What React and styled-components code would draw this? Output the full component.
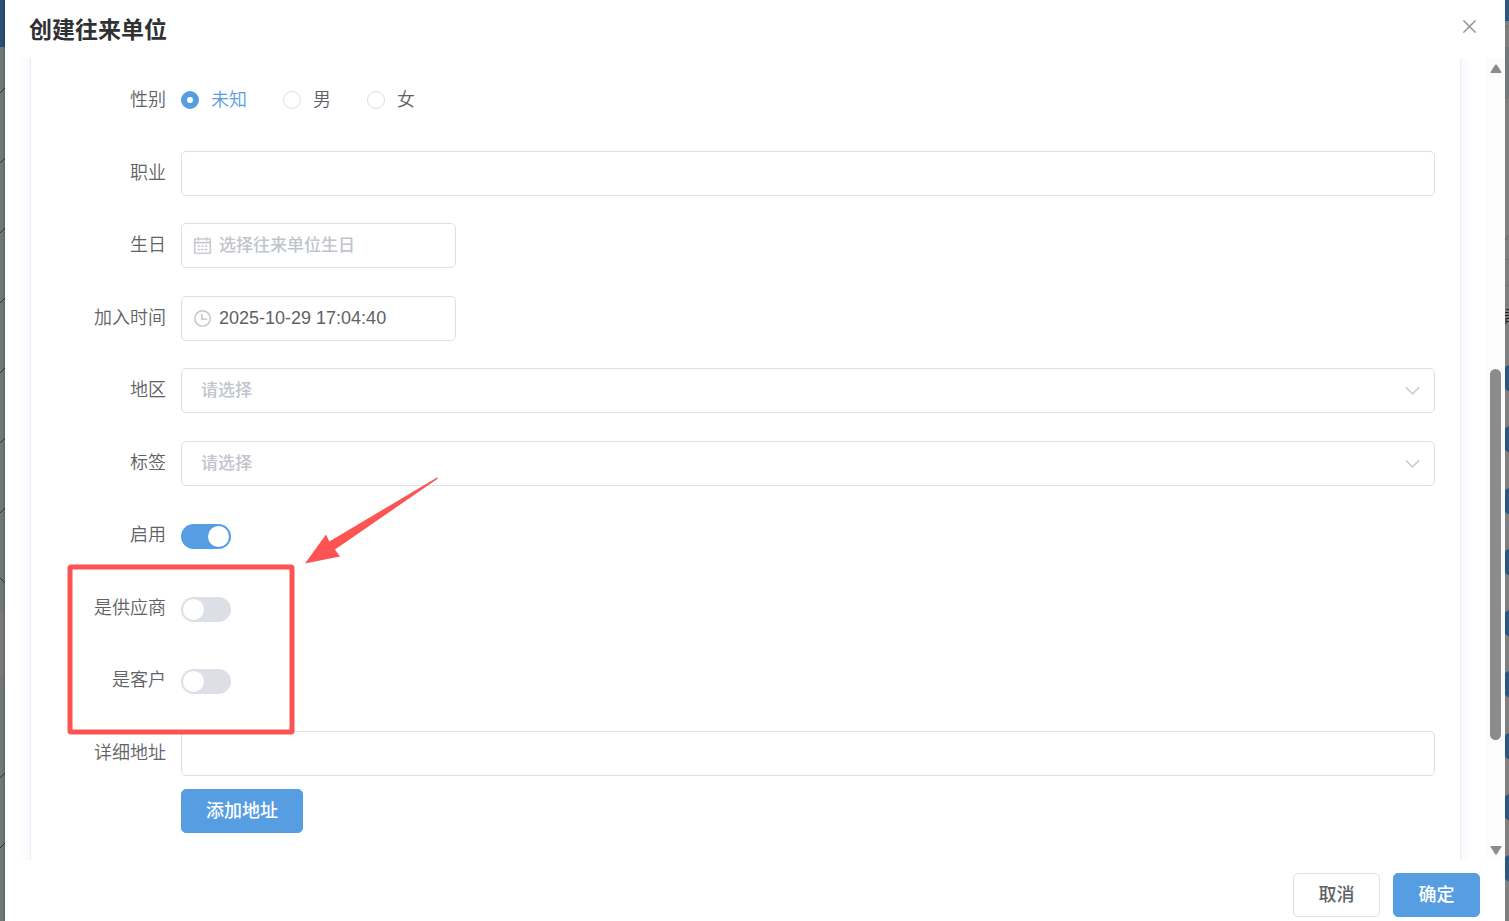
import { useState } from "react";
import styled, { createGlobalStyle } from "styled-components";

const CALENDAR = "M128 384v512h768V192H768v32a32 32 0 1 1-64 0v-32H320v32a32 32 0 0 1-64 0v-32H128v128h768v64zm192-256h384V96a32 32 0 1 1 64 0v32h160a32 32 0 0 1 32 32v768a32 32 0 0 1-32 32H96a32 32 0 0 1-32-32V160a32 32 0 0 1 32-32h160V96a32 32 0 0 1 64 0zm-32 384h64a32 32 0 0 1 0 64h-64a32 32 0 0 1 0-64m0 192h64a32 32 0 1 1 0 64h-64a32 32 0 1 1 0-64m192-192h64a32 32 0 0 1 0 64h-64a32 32 0 0 1 0-64m0 192h64a32 32 0 1 1 0 64h-64a32 32 0 1 1 0-64m192-192h64a32 32 0 1 1 0 64h-64a32 32 0 1 1 0-64m0 192h64a32 32 0 1 1 0 64h-64a32 32 0 1 1 0-64";
const CLOCK = "M512 896a384 384 0 1 0 0-768 384 384 0 0 0 0 768m0 64a448 448 0 1 1 0-896 448 448 0 0 1 0 896M480 256a32 32 0 0 1 32 32v256a32 32 0 0 1-64 0V288a32 32 0 0 1 32-32M480 512h256q32 0 32 32t-32 32H480q-32 0-32-32t32-32";
const ARROW_DOWN = "M831.872 340.864 512 652.672 192.128 340.864a30.592 30.592 0 0 0-42.752 0 29.12 29.12 0 0 0 0 41.6L489.664 714.24a32 32 0 0 0 44.672 0l340.288-331.712a29.12 29.12 0 0 0 0-41.728 30.592 30.592 0 0 0-42.752 0z";
const CLOSE = "M764.288 214.592 512 466.88 259.712 214.592a31.936 31.936 0 0 0-45.12 45.12L466.752 512 214.528 764.224a31.936 31.936 0 1 0 45.12 45.184L512 557.184l252.288 252.288a31.936 31.936 0 0 0 45.12-45.12L557.12 512.064l252.288-252.352a31.936 31.936 0 1 0-45.12-45.184z";

const genders = ["未知", "男", "女"];
const leftMarks = [90, 160, 230, 300, 370, 440, 510];
const rightDots = [378, 439, 501, 562, 623, 684, 746, 807, 868];

function Icon({ d, size }){
    return(
        <svg width={size} height={size} viewBox="0 0 1024 1024" fill="currentColor" stroke="currentColor" strokeWidth="14" aria-hidden="true">
            <path d={d} />
        </svg>
    )
}

function SwitchRow({ id, label, initial }){
    const [on, setOn] = useState(initial);
    return(
        <Row>
            <Label htmlFor={id}>{label}</Label>
            <Switch id={id} type="checkbox" role="switch" checked={on} onChange={(e) => setOn(e.target.checked)} />
        </Row>
    )
}

function SelectRow({ id, label }){
    return(
        <Row>
            <Label htmlFor={id}>{label}</Label>
            <SelectBox>
                <Select id={id} defaultValue="">
                    <option value="">请选择</option>
                </Select>
                <Icon d={ARROW_DOWN} size={19} />
            </SelectBox>
        </Row>
    )
}

export default function App(){
    const [gender, setGender] = useState("未知");

    return(
        <Page>
            <GlobalStyle />
            <Strip aria-hidden="true">
                <svg width="5" height="100%">
                    <rect width="5" height="47" fill="#2b4f75" />
                    <rect y="612" width="5" height="63" fill="#7d7b7b" />
                    {leftMarks.map((y) => <path key={y} d={`M0 ${y + 3}l5-5`} stroke="#333" />)}
                    <path d="M0 578l5 5M0 778l5-5M0 848l5-5" stroke="#333" />
                </svg>
            </Strip>

            <Dialog role="dialog" aria-labelledby="dialog-title">
                <Header>
                    <Title id="dialog-title">创建往来单位</Title>
                    <CloseButton type="button" aria-label="关闭"><Icon d={CLOSE} size={21} /></CloseButton>
                </Header>

                <Body>
                    <Panel>
                        <Row as="fieldset">
                            <Label as="legend">性别</Label>
                            <Radios>
                                {genders.map((g) => (
                                    <RadioLabel key={g} $active={g === gender}>
                                        <Radio type="radio" name="gender" checked={g === gender} onChange={() => setGender(g)} />
                                        {g}
                                    </RadioLabel>
                                ))}
                            </Radios>
                        </Row>
                        <Row>
                            <Label htmlFor="job">职业</Label>
                            <TextInput id="job" />
                        </Row>
                        <Row>
                            <Label htmlFor="birthday">生日</Label>
                            <DateBox>
                                <Icon d={CALENDAR} size={19} />
                                <DateInput id="birthday" placeholder="选择往来单位生日" />
                            </DateBox>
                        </Row>
                        <Row>
                            <Label htmlFor="joined">加入时间</Label>
                            <DateBox>
                                <Icon d={CLOCK} size={19} />
                                <DateInput id="joined" defaultValue="2025-10-29 17:04:40" />
                            </DateBox>
                        </Row>
                        <SelectRow id="area" label="地区" />
                        <SelectRow id="tag" label="标签" />
                        <SwitchRow id="enabled" label="启用" initial={true} />
                        <SwitchRow id="supplier" label="是供应商" initial={false} />
                        <SwitchRow id="customer" label="是客户" initial={false} />
                        <Row>
                            <Label htmlFor="address">详细地址</Label>
                            <TextInput id="address" />
                        </Row>
                        <AddRow>
                            <Button type="button" $primary $wide>添加地址</Button>
                        </AddRow>

                        <Marker viewBox="0 0 380 260" aria-hidden="true">
                            <rect x="9" y="90" width="222" height="165" rx="1" fill="none" stroke="#fc5453" strokeWidth="5" />
                            <path d="M244 86.500L265 57.500L268.300 64.500L376 .5L377 1.500L274 72.500L279 79.500Z" fill="#fc5453" />
                        </Marker>
                    </Panel>

                    <Scrollbar aria-hidden="true">
                        <svg width="12" height="10" viewBox="0 0 12 10"><path d="M1 9Q0 9 .6 8L5 1Q6 0 7 1L11.400 8Q12 9 11 9Z" fill="#8b8b8b" /></svg>
                        <Track><Thumb /></Track>
                        <svg width="12" height="10" viewBox="0 0 12 10"><path d="M1 1Q0 1 .6 2L5 9Q6 10 7 9L11.400 2Q12 1 11 1Z" fill="#8b8b8b" /></svg>
                    </Scrollbar>
                </Body>

                <Footer>
                    <Button type="button">取消</Button>
                    <Button type="button" $primary>确定</Button>
                </Footer>
            </Dialog>

            <Strip aria-hidden="true">
                <svg width="4" height="100%">
                    <rect width="4" height="100%" fill="#7f7f7f" />
                    <rect width="4" height="21" fill="#2b5680" />
                    <rect y="47" width="4" height="52" fill="#72777a" />
                    <path d="M0 26.500h4M0 259.500h4M0 285.500h4" stroke="#737373" />
                    <path d="M0 240l4-4" stroke="#666" />
                    <path d="M1 309.500h3M0 312.500h4M0 315.500h4M1 318v6M1 318.500h3M1 321.500h3" stroke="#222" />
                    {rightDots.map((y) => <circle key={y} cx="9" cy={y} r="14" fill="#2b5680" />)}
                </svg>
            </Strip>
        </Page>
    )
}

const GlobalStyle = createGlobalStyle`
    * {
        box-sizing: border-box;
    }
    body {
        margin: 0;
    }
    body, input, select, button {
        font-family: "Liberation Sans", "Noto Sans CJK SC", sans-serif;
        font-size: 18px;
        color: #606266;
    }
`

const Page = styled.div`
    display: grid;
    grid-template-columns: 5px 1fr 4px;
    height: 100vh;
    background-color: #72777a;
`

const Strip = styled.div`
    overflow: hidden;
`

const Dialog = styled.div`
    display: flex;
    flex-direction: column;
    min-width: 0;
    min-height: 0;
    background-color: #fff;
    box-shadow: 0 0 3px rgba(0, 0, 0, 0.4);
`

const Header = styled.header`
    display: flex;
    justify-content: space-between;
    height: 58px;
    flex-shrink: 0;
    padding: 16px 25px 0 24px;
`

const Title = styled.h1`
    margin: 0;
    font-size: 23px;
    line-height: 29px;
    font-weight: 700;
    color: #303133;
`

const CloseButton = styled.button`
    display: flex;
    width: 21px;
    height: 21px;
    padding: 0;
    border: none;
    background: none;
    color: #909399;
`

const Body = styled.main`
    display: flex;
    flex: 1;
    min-height: 0;
    overflow: hidden;
`

const Panel = styled.form`
    position: relative;
    flex: 1;
    min-width: 0;
    margin: -20px 25px;
    padding: 39px 25px 0 0;
    border: 1px solid #e9edf6;
    box-shadow: 0 0 12px rgba(60, 90, 200, 0.07);
`

const Row = styled.div`
    display: flex;
    align-items: center;
    height: 45px;
    min-width: 0;
    margin: 0 0 28px;
    padding: 0;
    border: none;

    &:nth-child(even) {
        margin-bottom: 27px;
    }
`

const Label = styled.label`
    flex-shrink: 0;
    float: left;
    width: 150px;
    padding: 0 15px 0 0;
    line-height: 45px;
    font-weight: 350;
    text-align: right;
`

const Radios = styled.div`
    display: flex;
    gap: 36px;
`

const RadioLabel = styled.label`
    display: flex;
    align-items: center;
    gap: 12px;
    line-height: 45px;
    font-weight: 350;
    color: ${(props) => (props.$active ? "#579de2" : "#606266")};
`

const Radio = styled.input`
    appearance: none;
    width: 18px;
    height: 18px;
    margin: 0 0 2px;
    border: 1px solid #dcdfe6;
    border-radius: 50%;
    background-color: #fff;

    &:checked {
        border: 6px solid #579de2;
    }
`

const TextInput = styled.input`
    flex: 1;
    min-width: 0;
    height: 45px;
    padding: 0 19px;
    border: 1px solid #dcdfe6;
    border-radius: 5px;
    background-color: #fff;
`

const DateBox = styled.div`
    display: flex;
    align-items: center;
    gap: 7px;
    width: 275px;
    height: 45px;
    padding: 0 11px;
    border: 1px solid #dcdfe6;
    border-radius: 5px;
    color: #c0c4cc;
`

const DateInput = styled.input`
    flex: 1;
    min-width: 0;
    height: 43px;
    padding: 0;
    border: none;
    background: none;
    font-weight: 500;

    &::placeholder {
        font-size: 17px;
        color: #c0c4cc;
    }
`

const SelectBox = styled.div`
    display: grid;
    grid-template-columns: 1fr 45px;
    align-items: center;
    flex: 1;
    color: #c0c4cc;

    svg {
        grid-area: 1 / 2;
        justify-self: center;
        pointer-events: none;
    }
`

const Select = styled.select`
    grid-area: 1 / 1 / 2 / 3;
    appearance: none;
    height: 45px;
    padding: 0 45px 0 19px;
    border: 1px solid #dcdfe6;
    border-radius: 5px;
    background: none;
    font-size: 17px;
    font-weight: 500;
    color: #c0c4cc;
`

const Switch = styled.input`
    appearance: none;
    display: flex;
    width: 50px;
    height: 25px;
    margin: 2px 0 0;
    padding: 2px;
    border-radius: 13px;
    background-color: #dcdfe6;

    &::before {
        content: "";
        width: 21px;
        height: 21px;
        border-radius: 50%;
        background-color: #fff;
    }

    &:checked {
        justify-content: flex-end;
        background-color: #579de2;
    }
`

const AddRow = styled.div`
    margin-top: -14px;
    padding-left: 150px;
`

const Button = styled.button`
    width: ${(props) => (props.$wide ? "122px" : "87px")};
    height: 44px;
    padding: 0 0 4px;
    border: 1px solid ${(props) => (props.$primary ? "#579de2" : "#dcdfe6")};
    border-radius: 5px;
    background-color: ${(props) => (props.$primary ? "#579de2" : "#fff")};
    color: ${(props) => (props.$primary ? "#fff" : "#606266")};
    font-weight: 500;
`

const Footer = styled.footer`
    display: flex;
    justify-content: flex-end;
    gap: 13px;
    height: 61px;
    flex-shrink: 0;
    padding: 13px 25px 0;
`

/* hand-drawn hint over the supplier / customer switches */
const Marker = styled.svg`
    position: absolute;
    left: 30px;
    top: 438px;
    width: 380px;
    height: 260px;
    pointer-events: none;
`

const Scrollbar = styled.div`
    display: flex;
    flex-direction: column;
    align-items: center;
    gap: 5px;
    width: 19px;
    padding: 6px 0 5px;
    background-color: #fcfcfc;
`

const Track = styled.div`
    display: grid;
    grid-template-rows: 290fr 371fr 100fr;
    flex: 1;
    width: 11px;
`

const Thumb = styled.div`
    grid-row: 2;
    border-radius: 6px;
    background-color: #8b8b8b;
`
